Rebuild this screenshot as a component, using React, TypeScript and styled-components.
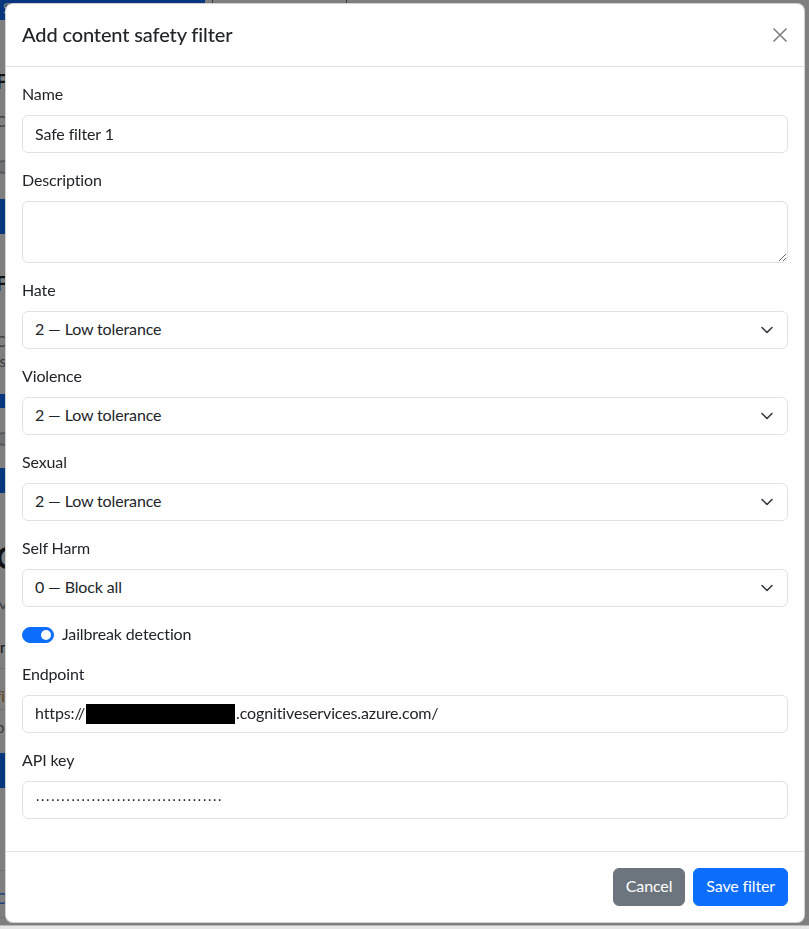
import React from "react";
import styled, { createGlobalStyle } from "styled-components";

const FONT = `"Lato", "Noto Sans", sans-serif`;

const GlobalStyle = createGlobalStyle`
  html, body { margin: 0; padding: 0; }
  body {
    font-family: ${FONT};
    color: #212529;
    background: #fff;
    overflow: hidden;
    font-size: 16px;
    letter-spacing: -0.13px;
  }
  * { box-sizing: border-box; }
`;

/* ---------- page behind the modal ---------- */

const Page = styled.div`
  height: 929px;
  margin-left: -4px;
  display: flex;
  flex-direction: column;
  align-items: flex-start;
  overflow: hidden;
  background: #fff;
`;

const TopBar = styled.div`
  display: flex;
  gap: 7px;
  margin-top: -14px;
`;

const BgButton = styled.div<{ $mt?: number; $h: number; $w: number; $outline?: boolean }>`
  margin-top: ${(p) => p.$mt ?? 0}px;
  height: ${(p) => p.$h}px;
  width: ${(p) => p.$w}px;
  flex: none;
  background: ${(p) => (p.$outline ? "#fff" : "#0d6efd")};
  color: ${(p) => (p.$outline ? "#6c757d" : "#fff")};
  border: 1px solid ${(p) => (p.$outline ? "#6c757d" : "#0d6efd")};
  border-radius: 4px;
  display: flex;
  align-items: flex-end;
  justify-content: center;
  font-size: 16px;
  line-height: 22px;
`;

const BgHeading = styled.div<{ $mt: number; $size: number }>`
  margin-top: ${(p) => p.$mt}px;
  font-size: ${(p) => p.$size}px;
  line-height: 1.1;
  font-weight: 700;
  color: #212529;
  white-space: nowrap;
`;

const BgText = styled.div<{ $mt: number; $color?: string }>`
  margin-top: ${(p) => p.$mt}px;
  font-size: 15px;
  line-height: 18px;
  color: ${(p) => p.$color ?? "#6c757d"};
  white-space: nowrap;
`;

const BgRule = styled.div<{ $mt: number }>`
  margin-top: ${(p) => p.$mt}px;
  height: 1px;
  width: 120px;
  background: #dee2e6;
`;

const BgKnob = styled.div<{ $mt: number }>`
  margin-top: ${(p) => p.$mt}px;
  width: 14px;
  height: 14px;
  border-radius: 50%;
  border: 2px solid #adb5bd;
  background: #dee2e6;
`;

const BottomStrip = styled.div`
  position: fixed;
  left: 0;
  right: 0;
  bottom: 0;
  height: 4px;
  background: #e6e6e6;
  border-top: 1px solid #b8b8b8;
`;

const Backdrop = styled.div`
  position: fixed;
  inset: 0;
  background: rgba(0, 0, 0, 0.5);
`;

/* ---------- modal ---------- */

const Dialog = styled.div`
  position: fixed;
  top: 3px;
  left: 5px;
  width: 800px;
  background: #fff;
  border: 1px solid rgba(0, 0, 0, 0.175);
  border-radius: 8px;
  display: flex;
  flex-direction: column;
`;

const Header = styled.div`
  display: flex;
  align-items: center;
  justify-content: space-between;
  padding: 16px;
  border-bottom: 1px solid #dee2e6;
`;

const Title = styled.h5`
  margin: 0;
  font-size: 20px;
  line-height: 28px;
  padding-bottom: 2px;
  font-weight: 500;
  color: #212529;
`;

const CloseButton = styled.button`
  width: 32px;
  height: 32px;
  margin: -8px -8px -8px auto;
  padding: 8px;
  border: 0;
  background: transparent;
  display: flex;
  align-items: center;
  justify-content: center;
  cursor: pointer;
`;

const Body = styled.div`
  padding: 16px;
  display: flex;
  flex-direction: column;
`;

const Group = styled.div`
  margin-bottom: 16px;
`;

const Label = styled.label`
  display: block;
  margin: -1px 0 9px;
  font-size: 16px;
  line-height: 24px;
  color: #212529;
`;

const fieldBase = `
  display: block;
  width: 100%;
  font-family: ${FONT};
  font-size: 16px;
  line-height: 24px;
  letter-spacing: inherit;
  color: #212529;
  background: #fff;
  border: 1px solid #dee2e6;
  border-radius: 6px;
  padding: 5px 12px 7px;
  outline: none;
`;

const Input = styled.input`
  ${fieldBase}
  height: 38px;
`;

const TextArea = styled.textarea`
  ${fieldBase}
  height: 62px;
  resize: vertical;
`;

const FakeField = styled.div`
  ${fieldBase}
  height: 38px;
  display: flex;
  align-items: center;
  white-space: nowrap;
  overflow: hidden;
`;

const SelectBox = styled.div`
  ${fieldBase}
  height: 38px;
  position: relative;
  padding-right: 36px;
  display: flex;
  align-items: center;
`;

const Chevron = styled.svg`
  position: absolute;
  right: 12px;
  top: 50%;
  margin-top: -6px;
  width: 16px;
  height: 12px;
`;

const Redaction = styled.span`
  display: inline-block;
  width: 149px;
  height: 20px;
  background: #000;
  margin: 2px 1px 0 1px;
`;

const Dots = styled.span`
  font-family: "Liberation Sans", sans-serif;
  letter-spacing: -0.27px;
  font-size: 16px;
  color: #212529;
  margin-top: 2px;
`;

const SwitchRow = styled.div`
  display: flex;
  align-items: center;
  gap: 8px;
  height: 24px;
  margin-bottom: 16px;
`;

const SwitchTrack = styled.span<{ $on: boolean }>`
  width: 32px;
  height: 16px;
  border-radius: 8px;
  background: ${(p) => (p.$on ? "#0d6efd" : "#fff")};
  border: 1px solid ${(p) => (p.$on ? "#0d6efd" : "#dee2e6")};
  display: flex;
  align-items: center;
  justify-content: ${(p) => (p.$on ? "flex-end" : "flex-start")};
  padding: 0 2px;
  flex: none;
`;

const SwitchKnob = styled.span`
  width: 10px;
  height: 10px;
  border-radius: 50%;
  background: #fff;
`;

const SwitchLabel = styled.span`
  font-size: 16px;
  line-height: 24px;
  margin-top: -2px;
  color: #212529;
`;

const Footer = styled.div`
  display: flex;
  justify-content: flex-end;
  align-items: center;
  padding: 12px;
  border-top: 1px solid #dee2e6;
`;

const Button = styled.button<{ $variant: "secondary" | "primary" }>`
  margin: 4px;
  height: 38px;
  padding: 5px 12px 7px;
  border-radius: 6px;
  border: 1px solid ${(p) => (p.$variant === "primary" ? "#0d6efd" : "#6c757d")};
  background: ${(p) => (p.$variant === "primary" ? "#0d6efd" : "#6c757d")};
  color: #fff;
  font-family: ${FONT};
  font-size: 16px;
  line-height: 24px;
  letter-spacing: inherit;
  cursor: pointer;
`;

const ChevronIcon = () => (
  <Chevron viewBox="0 0 16 12">
    <path d="M3 3.5 8 8.5 13 3.5" fill="none" stroke="#343a40" strokeWidth="1.6" strokeLinecap="round" strokeLinejoin="round" />
  </Chevron>
);

const SelectField = ({ value }: { value: string }) => (
  <SelectBox>
    {value}
    <ChevronIcon />
  </SelectBox>
);

const levels = [
  { label: "Hate", value: "2 — Low tolerance" },
  { label: "Violence", value: "2 — Low tolerance" },
  { label: "Sexual", value: "2 — Low tolerance" },
  { label: "Self Harm", value: "0 — Block all" },
];

export default function App() {
  return (
    <>
      <GlobalStyle />
      <Page>
        <TopBar>
          <BgButton $h={34} $w={209}>Save content filter messages</BgButton>
          <BgButton $h={34} $w={135} $outline>Reset to defaults</BgButton>
        </TopBar>
        <BgHeading $mt={50} $size={20}>Filters</BgHeading>
        <BgText $mt={20}>Configure content filters</BgText>
        <BgKnob $mt={30} />
        <BgButton $mt={25} $h={35} $w={180}>Save</BgButton>
        <BgHeading $mt={38} $size={20}>Filters</BgHeading>
        <BgText $mt={38}>Content safety</BgText>
        <BgText $mt={2}>is enabled</BgText>
        <BgButton $mt={24} $h={14} $w={180}>Add</BgButton>
        <BgKnob $mt={24} />
        <BgButton $mt={22} $h={25} $w={180}>Add</BgButton>
        <BgHeading $mt={48} $size={30}>Content</BgHeading>
        <BgText $mt={22}>Manage</BgText>
        <BgText $mt={24} $color="#212529">Instructions</BgText>
        <BgRule $mt={12} />
        <BgText $mt={18} $color="#c0762a">filter</BgText>
        <BgRule $mt={4} />
        <BgText $mt={8}>prompt</BgText>
        <BgButton $mt={17} $h={35} $w={180}>Save</BgButton>
        <BgRule $mt={82} />
        <BgText $mt={18} $color="#0d6efd">Configure</BgText>
        <BgRule $mt={10} />
      </Page>
      <Backdrop />
      <BottomStrip />
      <Dialog role="dialog">
        <Header>
          <Title>Add content safety filter</Title>
          <CloseButton aria-label="Close">
            <svg width="16" height="16" viewBox="0 0 16 16">
              <path d="M1.5 1.5 14.5 14.5M14.5 1.5 1.5 14.5" stroke="#000" strokeOpacity="0.5" strokeWidth="1.6" fill="none" />
            </svg>
          </CloseButton>
        </Header>
        <Body>
          <Group>
            <Label>Name</Label>
            <Input defaultValue="Safe filter 1" />
          </Group>
          <Group>
            <Label>Description</Label>
            <TextArea />
          </Group>
          {levels.map((l) => (
            <Group key={l.label}>
              <Label>{l.label}</Label>
              <SelectField value={l.value} />
            </Group>
          ))}
          <SwitchRow>
            <SwitchTrack $on>
              <SwitchKnob />
            </SwitchTrack>
            <SwitchLabel>Jailbreak detection</SwitchLabel>
          </SwitchRow>
          <Group>
            <Label>Endpoint</Label>
            <FakeField>
              https://
              <Redaction />
              .cognitiveservices.azure.com/
            </FakeField>
          </Group>
          <Group>
            <Label>API key</Label>
            <FakeField>
              <Dots>{"·".repeat(37)}</Dots>
            </FakeField>
          </Group>
        </Body>
        <Footer>
          <Button $variant="secondary">Cancel</Button>
          <Button $variant="primary">Save filter</Button>
        </Footer>
      </Dialog>
    </>
  );
}
